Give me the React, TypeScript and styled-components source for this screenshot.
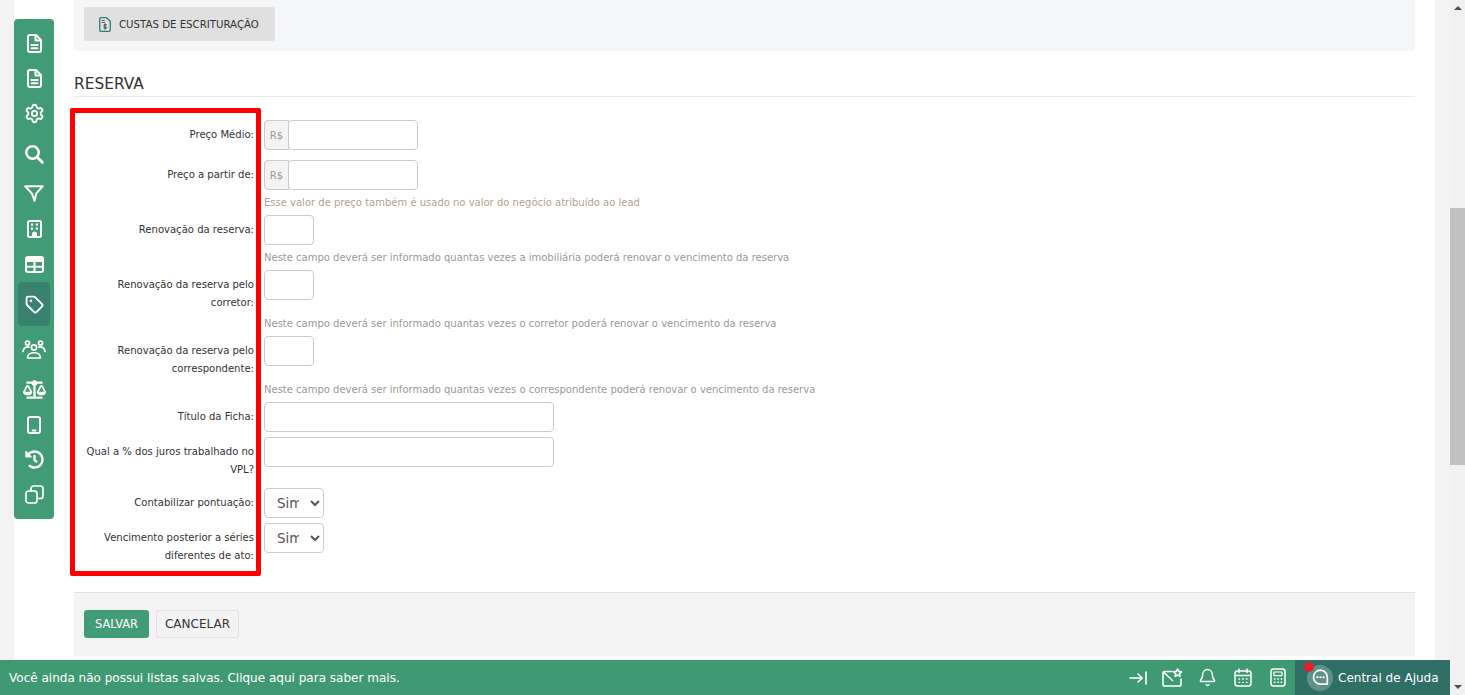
import React from "react";
import styled, { createGlobalStyle } from "styled-components";
import { FaBalanceScale, FaHistory } from "react-icons/fa";
import { Settings, Tag, Bell } from "lucide-react";

const Global = createGlobalStyle`
  html, body { margin: 0; padding: 0; height: 100%; overflow: hidden; }
  body { font-family: "DejaVu Sans", Verdana, sans-serif; background: #f3f3f3; color: #333; }
  * { box-sizing: border-box; }
`;

const Shell = styled.div`
  position: relative;
  display: flex;
  height: 695px;
  overflow: hidden;
`;
const Gutter = styled.div<{ $w: number }>`
  flex: 0 0 ${(p) => p.$w}px;
  background: #f3f3f3;
`;
const Page = styled.main`
  flex: 0 0 1421px;
  background: #fff;
  padding: 0 20px 0 60px;
  display: flex;
  flex-direction: column;
`;
const Scrollbar = styled.div`
  flex: 0 0 15px;
  background: #f1f1f1;
  display: flex;
  flex-direction: column;
  align-items: center;
  justify-content: space-between;
`;
const Arrow = styled.div<{ $up?: boolean }>`
  width: 0;
  height: 0;
  margin: 6px 0;
  border-left: 4px solid transparent;
  border-right: 4px solid transparent;
  ${(p) => (p.$up ? "border-bottom: 4px solid #505050;" : "border-top: 4px solid #505050;")}
`;
const Thumb = styled.div`
  width: 15px;
  height: 257px;
  margin-top: 192px;
  background: #c1c1c1;
`;
const Track = styled.div`
  flex: 1;
`;
const TopPanel = styled.section`
  height: 51px;
  padding: 7px 10px;
  background: #f5f6f7;
  border-radius: 0 0 4px 4px;
`;
const GreyButton = styled.button`
  display: inline-flex;
  align-items: center;
  gap: 8px;
  width: 191px;
  height: 34px;
  padding: 0 15px;
  border: 0;
  border-radius: 3px;
  background: #e0e0e0;
  color: #333;
  font: 10.2px "DejaVu Sans", sans-serif;
  white-space: nowrap;
`;
const SectionTitle = styled.h2`
  margin: 23px 0 0;
  height: 23px;
  font: 400 15.4px/20px "DejaVu Sans", sans-serif;
  color: #333;
  border-bottom: 1px solid #e8e8e8;
`;
const Form = styled.form`
  position: relative;
  padding: 23px 0 28px;
`;
const Highlight = styled.div`
  position: absolute;
  top: 11px;
  left: -4px;
  width: 191px;
  height: 468px;
  border: 5px solid #fe0000;
  border-radius: 2px;
  pointer-events: none;
`;
const Row = styled.div<{ $mb?: number }>`
  display: flex;
  gap: 10px;
  margin-bottom: ${(p) => p.$mb ?? 0}px;
`;
const Label = styled.label`
  flex: 0 0 180px;
  padding: 6px 0 0 8px;
  margin-bottom: -1px;
  text-align: right;
  font-size: 10.05px;
  line-height: 18px;
  color: #333;
`;
const Field = styled.div`
  display: flex;
`;
const Addon = styled.span`
  width: 25px;
  height: 30px;
  display: flex;
  align-items: center;
  justify-content: center;
  font-size: 10px;
  color: #999;
  background: #f3f3f3;
  border: 1px solid #ccc;
  border-radius: 4px 0 0 4px;
`;
const Input = styled.input<{ $w: number; $joined?: boolean }>`
  width: ${(p) => p.$w}px;
  height: 30px;
  margin-left: ${(p) => (p.$joined ? "-1px" : "0")};
  background: #fff;
  border: 1px solid #ccc;
  border-radius: 4px;
  outline: none;
`;
const Select = styled.select`
  width: 60px;
  height: 30px;
  padding: 0 8px;
  background: #fff;
  border: 1px solid #ccc;
  border-radius: 4px;
  font: 13.5px "DejaVu Sans", sans-serif;
  color: #555;
`;
const Hint = styled.p<{ $warm?: boolean }>`
  margin: 0;
  height: 25px;
  padding: 5px 0 0 190px;
  font-size: 10px;
  line-height: 16px;
  color: ${(p) => (p.$warm ? "#b39f8e" : "#999")};
`;
const Footer = styled.div`
  height: 64px;
  display: flex;
  gap: 7px;
  padding: 17px 10px 0;
  background: #f3f3f3;
  border-top: 1px solid #e0e0e0;
`;
const Save = styled.button`
  width: 65px;
  height: 28px;
  border: 0;
  border-radius: 3px;
  background: #439c78;
  color: #fff;
  font: 11.4px "DejaVu Sans", sans-serif;
`;
const Cancel = styled.button`
  width: 83px;
  height: 28px;
  border: 1px solid #e0e0e0;
  border-radius: 3px;
  background: #f3f3f3;
  color: #333;
  font: 12px "DejaVu Sans", sans-serif;
`;
const Sidebar = styled.nav`
  position: absolute;
  top: 19px;
  left: 14px;
  width: 40px;
  height: 500px;
  display: flex;
  flex-direction: column;
  align-items: center;
  padding-top: 7px;
  background: #429b77;
  border-radius: 4px;
  color: #fff;
`;
const SideItem = styled.div<{ $h: number; $active?: boolean }>`
  width: 32px;
  height: ${(p) => p.$h}px;
  display: flex;
  align-items: center;
  justify-content: center;
  border-radius: 4px;
  background: ${(p) => (p.$active ? "#38826f" : "transparent")};
`;
const Bar = styled.footer`
  position: absolute;
  left: 0;
  right: 15px;
  bottom: 0;
  height: 35px;
  display: flex;
  align-items: center;
  justify-content: space-between;
  padding-left: 9px;
  background: #3f9a74;
  color: #fff;
  font-size: 12.03px;
`;
const BarIcons = styled.div`
  display: flex;
  align-items: center;
  height: 100%;
`;
const BarSlot = styled.span`
  flex: 0 0 35px;
  display: flex;
  justify-content: center;
  align-items: center;
`;
const Help = styled.div`
  position: relative;
  height: 100%;
  width: 155px;
  display: flex;
  align-items: center;
  gap: 5px;
  padding-left: 12px;
  background: #2f6f66;
`;
const HelpIcon = styled.span`
  width: 26px;
  height: 26px;
  border-radius: 50%;
  background: #5f918a;
  display: flex;
  align-items: center;
  justify-content: center;
`;
const Dot = styled.span`
  position: absolute;
  top: 2px;
  left: 9px;
  width: 10px;
  height: 10px;
  border-radius: 50%;
  background: #e2202a;
`;

const line = { fill: "none", stroke: "currentColor", strokeLinecap: "round", strokeLinejoin: "round" } as const;

const Doc = () => (
  <svg width="15" height="19" viewBox="0 0 15 19" {...line} strokeWidth="2">
    <path d="M3 1h6l5 5v10a2 2 0 0 1-2 2H3a2 2 0 0 1-2-2V3a2 2 0 0 1 2-2z" />
    <path d="M8.5 1.5V6.5H13.5" />
    <path d="M4.5 11h6M4.5 14.2h6" />
  </svg>
);
const FeeDoc = () => (
  <svg width="12" height="15" viewBox="0 0 12 15" fill="none" strokeLinecap="round" strokeLinejoin="round">
    <path d="M2 .7h5.5l3.8 3.6V13a1.3 1.3 0 0 1-1.3 1.3H2A1.3 1.3 0 0 1 .7 13V2A1.3 1.3 0 0 1 2 .7z" stroke="#2f7d78" strokeWidth="1.3" />
    <path d="M3 3.5h2.5M3 5.5h2.5" stroke="#555" strokeWidth=".9" />
    <path d="M7.8 8c-.3-.6-2.8-.8-3 .4-.2 1.3 3 .9 2.9 2.2-.1 1.1-2.7 1-3.1.3M6 6.8v5.4" stroke="#444" strokeWidth="1" />
  </svg>
);
const Search = () => (
  <svg width="20" height="20" viewBox="0 0 20 20" {...line}>
    <circle cx="8.5" cy="8.5" r="6.2" strokeWidth="2.6" />
    <path d="M13.3 13.3L18.3 18.3" strokeWidth="3" />
  </svg>
);
const FunnelIcon = () => (
  <svg width="20" height="17" viewBox="0 0 20 17" {...line} strokeWidth="2">
    <path d="M1.2 1.2h17.6l-6.6 7.4-1.6 7.2-2.6-7.2z" />
  </svg>
);
const BuildingIcon = () => (
  <svg width="15" height="18" viewBox="0 0 15 18" fill="none">
    <rect x="1" y="1" width="13" height="16" rx="1.5" stroke="currentColor" strokeWidth="2" />
    <g fill="currentColor">
      <rect x="4" y="3.5" width="2.2" height="2.2" />
      <rect x="8.8" y="3.5" width="2.2" height="2.2" />
      <rect x="4" y="7.5" width="2.2" height="2.2" />
      <rect x="8.8" y="7.5" width="2.2" height="2.2" />
      <path d="M5 17v-3a2.5 2.5 0 0 1 5 0v3z" />
    </g>
  </svg>
);
const TableIcon = () => (
  <svg width="19" height="17" viewBox="0 0 19 17" fill="none">
    <rect x="1" y="1" width="17" height="15" rx="2" stroke="currentColor" strokeWidth="2" />
    <rect x="1" y="1" width="17" height="5" rx="1.5" fill="currentColor" />
    <path d="M1 10.8h17M9.5 6v10" stroke="currentColor" strokeWidth="2" />
  </svg>
);
const People = () => (
  <svg width="24" height="19" viewBox="0 0 24 19" {...line} strokeWidth="1.7">
    <circle cx="12" cy="7.5" r="2.6" />
    <circle cx="5.5" cy="3" r="2" />
    <circle cx="18.5" cy="3" r="2" />
    <path d="M5.5 18c0-7 13-7 13 0z" />
    <path d="M1 11.5c.3-3.4 3-5 6-4.4M23 11.5c-.3-3.4-3-5-6-4.4" />
  </svg>
);
const Phone = () => (
  <svg width="14" height="18" viewBox="0 0 14 18" {...line} strokeWidth="2">
    <rect x="1" y="1" width="12" height="16" rx="2" />
    <path d="M5.5 14.5h3" />
  </svg>
);
const CopyIcon = () => (
  <svg width="19" height="19" viewBox="0 0 19 19" {...line} strokeWidth="1.7">
    <rect x="1" y="6" width="11" height="12" rx="2.5" />
    <path d="M6 6V3.5A2.5 2.5 0 0 1 8.5 1h7.5A2.5 2.5 0 0 1 18 3.5V11a2.5 2.5 0 0 1-2.5 2.5H12" />
  </svg>
);
const EndArrow = () => (
  <svg width="18" height="14" viewBox="0 0 18 14" {...line} strokeWidth="1.6">
    <path d="M1 7h12M9 3l4.2 4L9 11M17 1v12" />
  </svg>
);
const MailStar = () => (
  <svg width="21" height="19" viewBox="0 0 21 19" {...line} strokeWidth="1.6">
    <path d="M10 3.5H2.5A1.5 1.5 0 0 0 1 5v11.5A1.5 1.5 0 0 0 2.5 18h15a1.5 1.5 0 0 0 1.5-1.5V11" />
    <path d="M2 4.5l8.5 8" />
    <path d="M15.5 1l1.3 2.4 2.7.4-2 1.9.5 2.6-2.5-1.3-2.4 1.3.5-2.6-2-1.9 2.7-.4z" />
  </svg>
);
const Calendar = () => (
  <svg width="18" height="19" viewBox="0 0 18 19" {...line} strokeWidth="1.5">
    <rect x="1" y="3" width="16" height="15" rx="2.5" />
    <path d="M1 7.5h16M5 1v3.5M13 1v3.5" />
    <path d="M5 11h.6M8.7 11h.6M12.4 11h.6M5 14.4h.6M8.7 14.4h.6M12.4 14.4h.6" strokeWidth="1.4" />
  </svg>
);
const CalculatorIcon = () => (
  <svg width="16" height="19" viewBox="0 0 16 19" {...line} strokeWidth="1.5">
    <rect x="1" y="1" width="14" height="17" rx="2.5" />
    <rect x="4" y="4" width="8" height="3.6" strokeWidth="1.2" />
    <path d="M4.4 11h.5M7.8 11h.5M11.2 11h.5M4.4 14.2h.5M7.8 14.2h.5M11.2 14.2h.5" strokeWidth="1.4" />
  </svg>
);
const Bubble = () => (
  <svg width="17" height="17" viewBox="0 0 17 17" {...line} strokeWidth="1.7">
    <path d="M8.5 1.2a7 7 0 0 0 0 14h6.3a.5.5 0 0 0 .5-.5V8.2a7 7 0 0 0-6.8-7z" />
    <path d="M5.2 8.2h.3M8.3 8.2h.3M11.4 8.2h.3" strokeWidth="2" />
  </svg>
);

const hints = {
  a: "Esse valor de preço também é usado no valor do negócio atribuído ao lead",
  b: "Neste campo deverá ser informado quantas vezes a imobiliária poderá renovar o vencimento da reserva",
  c: "Neste campo deverá ser informado quantas vezes o corretor poderá renovar o vencimento da reserva",
  d: "Neste campo deverá ser informado quantas vezes o correspondente poderá renovar o vencimento da reserva",
};

export default function App() {
  return (
    <Shell>
      <Global />
      <Gutter $w={14} />
      <Page>
        <TopPanel>
          <GreyButton type="button">
            <FeeDoc />
            CUSTAS DE ESCRITURAÇÃO
          </GreyButton>
        </TopPanel>
        <SectionTitle>RESERVA</SectionTitle>
        <Form>
          <Row $mb={10}>
            <Label>Preço Médio:</Label>
            <Field><Addon>R$</Addon><Input $w={130} $joined /></Field>
          </Row>
          <Row>
            <Label>Preço a partir de:</Label>
            <Field><Addon>R$</Addon><Input $w={130} $joined /></Field>
          </Row>
          <Hint $warm>{hints.a}</Hint>
          <Row>
            <Label>Renovação da reserva:</Label>
            <Input $w={50} />
          </Row>
          <Hint>{hints.b}</Hint>
          <Row>
            <Label>Renovação da reserva pelo corretor:</Label>
            <Input $w={50} />
          </Row>
          <Hint>{hints.c}</Hint>
          <Row>
            <Label>Renovação da reserva pelo correspondente:</Label>
            <Input $w={50} />
          </Row>
          <Hint>{hints.d}</Hint>
          <Row $mb={5}>
            <Label>Título da Ficha:</Label>
            <Input $w={290} />
          </Row>
          <Row $mb={10}>
            <Label>Qual a % dos juros trabalhado no VPL?</Label>
            <Input $w={290} />
          </Row>
          <Row $mb={5}>
            <Label>Contabilizar pontuação:</Label>
            <Select><option>Sim</option></Select>
          </Row>
          <Row>
            <Label>Vencimento posterior a séries diferentes de ato:</Label>
            <Select><option>Sim</option></Select>
          </Row>
          <Highlight />
        </Form>
        <Footer>
          <Save type="button">SALVAR</Save>
          <Cancel type="button">CANCELAR</Cancel>
        </Footer>
      </Page>
      <Gutter $w={15} />
      <Scrollbar>
        <Arrow $up />
        <Track><Thumb /></Track>
        <Arrow />
      </Scrollbar>
      <Sidebar>
        <SideItem $h={35}><Doc /></SideItem>
        <SideItem $h={35}><Doc /></SideItem>
        <SideItem $h={35}><Settings size={21} strokeWidth={2.1} /></SideItem>
        <SideItem $h={45}><Search /></SideItem>
        <SideItem $h={35}><FunnelIcon /></SideItem>
        <SideItem $h={35}><BuildingIcon /></SideItem>
        <SideItem $h={36}><TableIcon /></SideItem>
        <SideItem $h={44} $active><Tag size={19} strokeWidth={2.4} /></SideItem>
        <SideItem $h={46}><People /></SideItem>
        <SideItem $h={35}><FaBalanceScale size={23} /></SideItem>
        <SideItem $h={35}><Phone /></SideItem>
        <SideItem $h={35}><FaHistory size={19} /></SideItem>
        <SideItem $h={35}><CopyIcon /></SideItem>
      </Sidebar>
      <Bar>
        <span>Você ainda não possui listas salvas. Clique aqui para saber mais.</span>
        <BarIcons>
          <BarSlot><EndArrow /></BarSlot>
          <BarSlot><MailStar /></BarSlot>
          <BarSlot><Bell size={19} strokeWidth={1.8} /></BarSlot>
          <BarSlot><Calendar /></BarSlot>
          <BarSlot><CalculatorIcon /></BarSlot>
          <Help>
            <Dot />
            <HelpIcon><Bubble /></HelpIcon>
            Central de Ajuda
          </Help>
        </BarIcons>
      </Bar>
    </Shell>
  );
}
